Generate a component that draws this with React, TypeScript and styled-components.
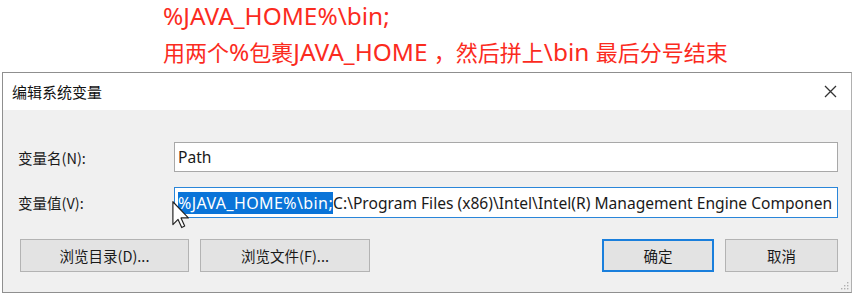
import React from "react";
import styled, { createGlobalStyle } from "styled-components";

const Global = createGlobalStyle`
  html, body { margin: 0; padding: 0; background: #ffffff; }
  body { width: 855px; height: 295px; overflow: hidden; font-family: "Noto Sans", "Noto Sans CJK SC", sans-serif; }
`;

const Page = styled.div`
  display: flex;
  flex-direction: column;
  width: 855px;
  height: 295px;
`;

const Annotation = styled.div`
  display: flex;
  flex-direction: column;
  padding-left: 163px;
  height: 72px;
  color: #fb2b1e;
  font-family: "Noto Sans CJK SC", sans-serif;
  font-size: 22px;
`;

const NoteLine = styled.div<{ $h: number }>`
  height: ${(p) => p.$h}px;
  line-height: ${(p) => p.$h}px;
  white-space: nowrap;
`;

const Latin = styled.span`
  font-family: "Noto Sans", sans-serif;
  font-size: 24.4px;
`;

const Dialog = styled.div`
  position: relative;
  margin-left: 2px;
  width: 850px;
  height: 221px;
  box-sizing: border-box;
  border: 1px solid #8f8f8f;
  border-right-color: #b0b0b0;
  display: flex;
  flex-direction: column;
  background: #f0f0f0;
`;

const TitleBar = styled.div`
  height: 37px;
  flex: none;
  background: #ffffff;
  display: flex;
  align-items: center;
  justify-content: space-between;
  padding: 0 14px 0 9px;
  font-family: "Noto Sans CJK SC", sans-serif;
  font-size: 15px;
  color: #111111;
`;

const Body = styled.div`
  flex: 1;
  display: flex;
  flex-direction: column;
  padding: 32px 13px 0 15px;
`;

const FieldRow = styled.div<{ $mt: number }>`
  display: flex;
  align-items: center;
  margin-top: ${(p) => p.$mt}px;
`;

const Label = styled.div`
  width: 156px;
  flex: none;
  font-family: "Noto Sans CJK SC", sans-serif;
  font-size: 14.5px;
  color: #1a1a1a;
`;

const TextBox = styled.div<{ $focused?: boolean }>`
  flex: 1;
  height: ${(p) => (p.$focused ? 31 : 30)}px;
  box-sizing: border-box;
  border: 1px solid ${(p) => (p.$focused ? "#2a86d9" : "#a8a8a8")};
  background: #ffffff;
  display: flex;
  align-items: center;
  padding-left: 3px;
  overflow: hidden;
  white-space: nowrap;
  font-family: "Noto Sans", sans-serif;
  font-size: 15.6px;
  color: #1a1a1a;
`;

const Selected = styled.span`
  background: #0a74d8;
  color: #ffffff;
  font-size: 16px;
  line-height: 22px;
  display: inline-block;
  letter-spacing: 0.4px;
`;

const ButtonRow = styled.div`
  display: flex;
  align-items: center;
  margin-top: 21px;
  padding-left: 2px;
`;

const Spacer = styled.div`
  flex: 1;
`;

const Button = styled.div<{ $w: number; $primary?: boolean; $ml?: number }>`
  width: ${(p) => p.$w}px;
  height: 33px;
  margin-left: ${(p) => p.$ml ?? 0}px;
  box-sizing: border-box;
  border: ${(p) => (p.$primary ? "2px solid #1a7fdc" : "1px solid #b3b3b3")};
  background: #e3e3e3;
  display: flex;
  align-items: center;
  justify-content: center;
  font-family: "Noto Sans CJK SC", sans-serif;
  font-size: 14.5px;
  color: #1a1a1a;
`;

const Cursor = styled.svg`
  position: absolute;
  left: 169px;
  top: 128px;
`;

const Grip = styled.svg`
  position: absolute;
  right: 2px;
  bottom: 2px;
`;

const CloseIcon = () => (
  <svg width="13" height="13" viewBox="0 0 13 13">
    <path d="M1 1 L12 12 M12 1 L1 12" stroke="#333" strokeWidth="1.3" fill="none" />
  </svg>
);

export default function App() {
  return (
    <Page>
      <Global />
      <Annotation>
        <NoteLine $h={30}>
          <Latin>%JAVA_HOME%\bin;</Latin>
        </NoteLine>
        <NoteLine $h={42}>
          用两个<Latin>%</Latin>包裹<Latin>JAVA_HOME </Latin>，然后拼上<Latin>\bin </Latin>最后分号结束
        </NoteLine>
      </Annotation>
      <Dialog>
        <TitleBar>
          <span>编辑系统变量</span>
          <CloseIcon />
        </TitleBar>
        <Body>
          <FieldRow $mt={0}>
            <Label>变量名(N):</Label>
            <TextBox>Path</TextBox>
          </FieldRow>
          <FieldRow $mt={15}>
            <Label>变量值(V):</Label>
            <TextBox $focused>
              <Selected>%JAVA_HOME%\bin;</Selected>
              C:\Program Files (x86)\Intel\Intel(R) Management Engine Componen
            </TextBox>
          </FieldRow>
          <ButtonRow>
            <Button $w={169}>浏览目录(D)...</Button>
            <Button $w={170} $ml={11}>浏览文件(F)...</Button>
            <Spacer />
            <Button $w={112} $primary>确定</Button>
            <Button $w={113} $ml={11}>取消</Button>
          </ButtonRow>
        </Body>
        <Cursor width="18" height="28" viewBox="0 0 12 19">
          <path
            d="M0.5 0.5 L0.5 16 L4 12.5 L6.5 18 L8.5 17 L6 11.5 L11 11.5 Z"
            fill="#ffffff"
            stroke="#222"
            strokeWidth="0.8"
            strokeLinejoin="round"
          />
        </Cursor>
        <Grip width="10" height="10" viewBox="0 0 10 10">
          <rect x="8" y="2" width="1.4" height="1.4" fill="#b0b0b0" />
          <rect x="5" y="5" width="1.4" height="1.4" fill="#b0b0b0" />
          <rect x="8" y="5" width="1.4" height="1.4" fill="#b0b0b0" />
          <rect x="2" y="8" width="1.4" height="1.4" fill="#b0b0b0" />
          <rect x="5" y="8" width="1.4" height="1.4" fill="#b0b0b0" />
          <rect x="8" y="8" width="1.4" height="1.4" fill="#b0b0b0" />
        </Grip>
      </Dialog>
    </Page>
  );
}
